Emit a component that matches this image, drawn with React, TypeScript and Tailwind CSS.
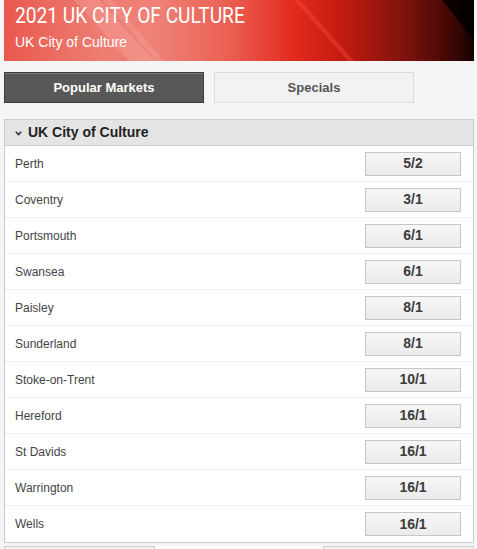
import React from 'react';

const RUNNERS: { name: string; odds: string }[] = [
  { name: 'Perth', odds: '5/2' },
  { name: 'Coventry', odds: '3/1' },
  { name: 'Portsmouth', odds: '6/1' },
  { name: 'Swansea', odds: '6/1' },
  { name: 'Paisley', odds: '8/1' },
  { name: 'Sunderland', odds: '8/1' },
  { name: 'Stoke-on-Trent', odds: '10/1' },
  { name: 'Hereford', odds: '16/1' },
  { name: 'St Davids', odds: '16/1' },
  { name: 'Warrington', odds: '16/1' },
  { name: 'Wells', odds: '16/1' },
];

const Banner: React.FC = () => (
  <div className="relative h-[61px] overflow-hidden bg-[linear-gradient(90deg,#e9584d_0%,#ee7c71_20%,#ef8277_32%,#ea5f52_48%,#e3291c_62%,#c21b11_72%,#7a120c_86%,#3a0604_96%,#120101_100%)]">
    {/* streaks */}
    <svg className="absolute inset-0" width="470" height="61" viewBox="0 0 470 61">
      <path d="M70 0 L95 0 L150 61 L125 61 Z" fill="#fff" opacity="0.12" />
      <path d="M100 0 L108 0 L160 61 L152 61 Z" fill="#fff" opacity="0.1" />
      <path d="M290 0 L296 0 L350 61 L344 61 Z" fill="#ff5040" opacity="0.35" />
      <path d="M438 0 L470 0 L470 40 Z" fill="#000" opacity="0.8" />
    </svg>
    <div className="relative pl-[11px] pt-[3px] text-white">
      <div className="origin-left scale-x-[0.87] font-['Roboto',sans-serif] text-[22px] leading-[26px] whitespace-nowrap">
        2021 UK CITY OF CULTURE
      </div>
      <div className="mt-[5px] font-['Liberation_Sans',Arial,sans-serif] text-[14px] leading-[16px]">
        UK City of Culture
      </div>
    </div>
  </div>
);

const App: React.FC = () => {
  return (
    <div className="h-[549px] overflow-hidden bg-[#f5f5f5] pl-[4px] pr-[3px] font-['Liberation_Sans',Arial,sans-serif]">
      <Banner />

      {/* Tabs */}
      <div className="mt-[11px] flex gap-[10px]">
        <button className="h-[31px] w-[200px] border border-[#3c3c3c] bg-[#585858] text-[13px] font-bold text-white shadow-[inset_0_1px_0_#7a7a7a]">
          Popular Markets
        </button>
        <button className="h-[31px] w-[200px] border border-[#dcdcdc] bg-[#f2f2f2] text-[13px] font-bold text-[#555]">
          Specials
        </button>
      </div>

      {/* Market panel */}
      <div className="mt-[16px] border border-[#cccccc] bg-white">
        <div className="flex h-[26px] items-center gap-[6px] border-b border-[#d0d0d0] bg-[#e4e4e4] pl-[10px]">
          <svg width="7" height="5" viewBox="0 0 7 5" className="mt-[1px]">
            <polyline points="0.8,0.8 3.5,3.6 6.2,0.8" fill="none" stroke="#333" strokeWidth="1.6" />
          </svg>
          <span className="text-[14px] font-bold text-[#222]">UK City of Culture</span>
        </div>
        {RUNNERS.map((r, i) => (
          <div
            key={r.name}
            className={`flex h-[36px] items-center justify-between pl-[10px] pr-[12px] ${i < RUNNERS.length - 1 ? 'border-b border-[#eeeeee]' : ''}`}
          >
            <span className="text-[12px] text-[#444]">{r.name}</span>
            <button className="h-[24px] w-[96px] border border-[#c6c6c6] bg-[linear-gradient(#f6f6f6,#ebebeb)] text-[14px] font-bold text-[#3c3c3c]">
              {r.odds}
            </button>
          </div>
        ))}
      </div>

      {/* Bottom nav (cut off) */}
      <div className="mt-[3px] flex">
        <div className="h-[30px] w-[151px] border border-[#cccccc] bg-[#f2f2f2]" />
        <div className="h-[30px] w-[168px] bg-white" />
        <div className="h-[30px] w-[151px] border border-[#cccccc] bg-[#f2f2f2]" />
      </div>
    </div>
  );
};

export default App;
